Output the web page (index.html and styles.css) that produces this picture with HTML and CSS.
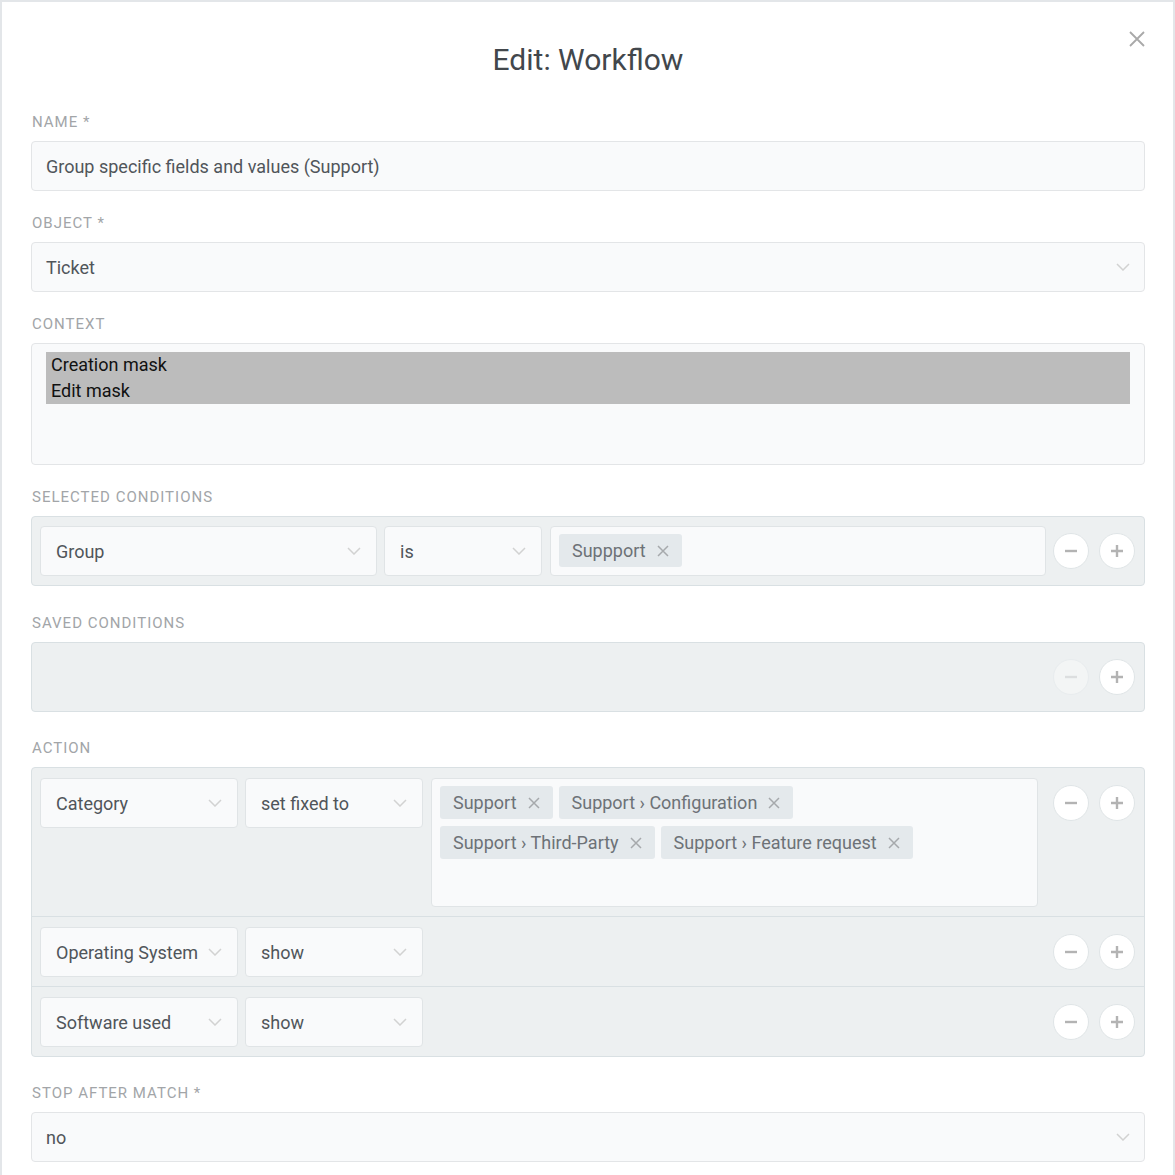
FILE: index.html
```html
<!DOCTYPE html>
<html>
<head>
<meta charset="utf-8">
<link rel="stylesheet" href="styles.css">
</head>
<body>
<div class="modal">
  <button class="close" aria-label="Close">
    <svg width="16" height="16" viewBox="0 0 16 16"><path d="M1 1L15 15M15 1L1 15" stroke="#a9a9a9" stroke-width="1.8" fill="none"/></svg>
  </button>
  <h1 class="title">Edit: Workflow</h1>

  <div class="field">
    <div class="label">Name *</div>
    <div class="input">Group specific fields and values (Support)</div>
  </div>

  <div class="field">
    <div class="label">Object *</div>
    <div class="input select">Ticket<span class="chev"><svg width="14" height="8" viewBox="0 0 14 8"><path d="M1 1L7 7L13 1" stroke="#d2d2d2" stroke-width="1.5" fill="none"/></svg></span></div>
  </div>

  <div class="field">
    <div class="label">Context</div>
    <div class="multi">
      <div class="opt">Creation mask</div>
      <div class="opt">Edit mask</div>
    </div>
  </div>

  <div class="field box-field">
    <div class="label">Selected conditions</div>
    <div class="box">
      <div class="row cond-row">
        <div class="sel w337">Group<span class="chev"><svg width="14" height="8" viewBox="0 0 14 8"><path d="M1 1L7 7L13 1" stroke="#d2d2d2" stroke-width="1.5" fill="none"/></svg></span></div>
        <div class="sel w158 ml7">is<span class="chev"><svg width="14" height="8" viewBox="0 0 14 8"><path d="M1 1L7 7L13 1" stroke="#d2d2d2" stroke-width="1.5" fill="none"/></svg></span></div>
        <div class="tags ml8 cond-tags">
          <span class="tag">Suppport<span class="x"><svg width="12" height="12" viewBox="0 0 12 12"><path d="M1 1L11 11M11 1L1 11" stroke="#a6a9ac" stroke-width="1.5" fill="none"/></svg></span></span>
        </div>
        <div class="btns ml7">
          <button class="circle"><svg width="14" height="14" viewBox="0 0 14 14"><path d="M1 7H13" stroke="#b3b3b3" stroke-width="2.4"/></svg></button>
          <button class="circle"><svg width="14" height="14" viewBox="0 0 14 14"><path d="M1 7H13M7 1V13" stroke="#b3b3b3" stroke-width="2.4"/></svg></button>
        </div>
      </div>
    </div>
  </div>

  <div class="field box-field tight">
    <div class="label">Saved conditions</div>
    <div class="box">
      <div class="row cond-row empty">
        <div class="btns">
          <button class="circle disabled"><svg width="14" height="14" viewBox="0 0 14 14"><path d="M1 7H13" stroke="#dcdedf" stroke-width="2.4"/></svg></button>
          <button class="circle"><svg width="14" height="14" viewBox="0 0 14 14"><path d="M1 7H13M7 1V13" stroke="#b3b3b3" stroke-width="2.4"/></svg></button>
        </div>
      </div>
    </div>
  </div>

  <div class="field box-field tight">
    <div class="label">Action</div>
    <div class="box">
      <div class="row act-row">
        <div class="sel w198">Category<span class="chev"><svg width="14" height="8" viewBox="0 0 14 8"><path d="M1 1L7 7L13 1" stroke="#d2d2d2" stroke-width="1.5" fill="none"/></svg></span></div>
        <div class="sel w178 ml7">set fixed to<span class="chev"><svg width="14" height="8" viewBox="0 0 14 8"><path d="M1 1L7 7L13 1" stroke="#d2d2d2" stroke-width="1.5" fill="none"/></svg></span></div>
        <div class="tags ml8 act-tags">
          <span class="tag">Support<span class="x"><svg width="12" height="12" viewBox="0 0 12 12"><path d="M1 1L11 11M11 1L1 11" stroke="#a6a9ac" stroke-width="1.5" fill="none"/></svg></span></span>
          <span class="tag">Support › Configuration<span class="x"><svg width="12" height="12" viewBox="0 0 12 12"><path d="M1 1L11 11M11 1L1 11" stroke="#a6a9ac" stroke-width="1.5" fill="none"/></svg></span></span>
          <span class="tag">Support › Third-Party<span class="x"><svg width="12" height="12" viewBox="0 0 12 12"><path d="M1 1L11 11M11 1L1 11" stroke="#a6a9ac" stroke-width="1.5" fill="none"/></svg></span></span>
          <span class="tag">Support › Feature request<span class="x"><svg width="12" height="12" viewBox="0 0 12 12"><path d="M1 1L11 11M11 1L1 11" stroke="#a6a9ac" stroke-width="1.5" fill="none"/></svg></span></span>
        </div>
        <div class="btns ml15">
          <button class="circle"><svg width="14" height="14" viewBox="0 0 14 14"><path d="M1 7H13" stroke="#b3b3b3" stroke-width="2.4"/></svg></button>
          <button class="circle"><svg width="14" height="14" viewBox="0 0 14 14"><path d="M1 7H13M7 1V13" stroke="#b3b3b3" stroke-width="2.4"/></svg></button>
        </div>
      </div>
      <div class="row act-row">
        <div class="sel w198">Operating System<span class="chev"><svg width="14" height="8" viewBox="0 0 14 8"><path d="M1 1L7 7L13 1" stroke="#d2d2d2" stroke-width="1.5" fill="none"/></svg></span></div>
        <div class="sel w178 ml7">show<span class="chev"><svg width="14" height="8" viewBox="0 0 14 8"><path d="M1 1L7 7L13 1" stroke="#d2d2d2" stroke-width="1.5" fill="none"/></svg></span></div>
        <div class="spacer"></div>
        <div class="btns">
          <button class="circle"><svg width="14" height="14" viewBox="0 0 14 14"><path d="M1 7H13" stroke="#b3b3b3" stroke-width="2.4"/></svg></button>
          <button class="circle"><svg width="14" height="14" viewBox="0 0 14 14"><path d="M1 7H13M7 1V13" stroke="#b3b3b3" stroke-width="2.4"/></svg></button>
        </div>
      </div>
      <div class="row act-row last">
        <div class="sel w198">Software used<span class="chev"><svg width="14" height="8" viewBox="0 0 14 8"><path d="M1 1L7 7L13 1" stroke="#d2d2d2" stroke-width="1.5" fill="none"/></svg></span></div>
        <div class="sel w178 ml7">show<span class="chev"><svg width="14" height="8" viewBox="0 0 14 8"><path d="M1 1L7 7L13 1" stroke="#d2d2d2" stroke-width="1.5" fill="none"/></svg></span></div>
        <div class="spacer"></div>
        <div class="btns">
          <button class="circle"><svg width="14" height="14" viewBox="0 0 14 14"><path d="M1 7H13" stroke="#b3b3b3" stroke-width="2.4"/></svg></button>
          <button class="circle"><svg width="14" height="14" viewBox="0 0 14 14"><path d="M1 7H13M7 1V13" stroke="#b3b3b3" stroke-width="2.4"/></svg></button>
        </div>
      </div>
    </div>
  </div>

  <div class="field">
    <div class="label">Stop after match *</div>
    <div class="input select">no<span class="chev"><svg width="14" height="8" viewBox="0 0 14 8"><path d="M1 1L7 7L13 1" stroke="#d2d2d2" stroke-width="1.5" fill="none"/></svg></span></div>
  </div>
</div>
</body>
</html>
```

FILE: styles.css
```css
html, body {
  margin: 0;
  padding: 0;
}
body {
  background: #e3e6e9;
  padding: 2px 2px 0 2px;
  font-family: Roboto, "Liberation Sans", sans-serif;
  color: #50555a;
  height: 1175px;
  box-sizing: border-box;
  overflow: hidden;
}
.modal {
  position: relative;
  background: #fff;
  height: 100%;
  padding: 0 28px 0 29px;
  box-sizing: border-box;
}
.close {
  position: absolute;
  top: 27px;
  right: 26px;
  width: 20px;
  height: 20px;
  padding: 2px;
  border: 0;
  background: none;
}
.title {
  margin: 0 0 34px 0;
  padding-top: 40px;
  font-size: 30px;
  line-height: 36px;
  font-weight: 400;
  text-align: center;
  color: #42474c;
}
.field {
  margin-bottom: 22px;
}
.box-field {
  margin-bottom: 27px;
}
.box-field.tight {
  margin-bottom: 26px;
}
.label {
  font-size: 15px;
  line-height: 21px;
  height: 20px;
  letter-spacing: 1px;
  text-transform: uppercase;
  color: #a2a5a8;
  margin-bottom: 9px;
  padding-left: 1px;
}
.input {
  height: 50px;
  box-sizing: border-box;
  border: 1px solid #e3e5e7;
  border-radius: 4px;
  background: #f9fafb;
  padding: 0 14px;
  font-size: 18px;
  display: flex;
  align-items: center;
}
.select {
  justify-content: space-between;
}
.chev {
  display: flex;
  align-items: center;
}
.multi {
  height: 122px;
  box-sizing: border-box;
  border: 1px solid #e3e5e7;
  border-radius: 4px;
  background: #f9fafb;
  padding: 8px 14px;
}
.opt {
  background: #bcbcbc;
  color: #111;
  font-size: 18px;
  height: 26px;
  line-height: 26px;
  padding-left: 5px;
}
.box {
  border: 1px solid #d9e0e3;
  border-radius: 4px;
  background: #edf0f1;
}
.row {
  display: flex;
  align-items: flex-start;
  padding: 9px 8px 9px 8px;
}
.act-row {
  padding: 10px 8px 9px 8px;
  border-bottom: 1px solid #d9e0e3;
}
.act-row.last {
  border-bottom: 0;
}
.cond-row {
  height: 68px;
  box-sizing: border-box;
}
.empty {
  justify-content: flex-end;
}
.sel {
  height: 50px;
  box-sizing: border-box;
  border: 1px solid #e0e4e6;
  border-radius: 4px;
  background: #f9fafb;
  padding: 0 15px;
  font-size: 18px;
  display: flex;
  align-items: center;
  justify-content: space-between;
  flex-shrink: 0;
  white-space: nowrap;
}
.w337 { width: 337px; }
.w158 { width: 158px; }
.w198 { width: 198px; }
.w178 { width: 178px; }
.ml7 { margin-left: 7px; }
.ml8 { margin-left: 8px; }
.ml15 { margin-left: 15px; }
.spacer { flex: 1; }
.tags {
  flex: 1;
  box-sizing: border-box;
  border: 1px solid #e0e4e6;
  border-radius: 4px;
  background: #f9fafb;
  padding: 7px 8px;
  display: flex;
  flex-wrap: wrap;
  align-content: flex-start;
  gap: 7px 6px;
}
.cond-tags { height: 50px; }
.act-tags {
  height: 129px;
  padding-right: 40px;
}
.tag {
  height: 33px;
  box-sizing: border-box;
  background: #e4e9ec;
  border-radius: 3px;
  color: #6d7277;
  font-size: 18px;
  padding: 0 13px 0 13px;
  display: inline-flex;
  align-items: center;
  white-space: nowrap;
}
.x {
  display: inline-flex;
  margin-left: 11px;
}
.btns {
  display: flex;
  gap: 10px;
  margin-right: 1px;
  flex-shrink: 0;
}
.circle {
  width: 36px;
  height: 36px;
  margin-top: 7px;
  border-radius: 50%;
  border: 1px solid #e0e5e7;
  background: #fff;
  padding: 0;
  display: flex;
  align-items: center;
  justify-content: center;
}
.circle.disabled {
  background: #f3f5f5;
  border-color: #e8ecee;
}
```
